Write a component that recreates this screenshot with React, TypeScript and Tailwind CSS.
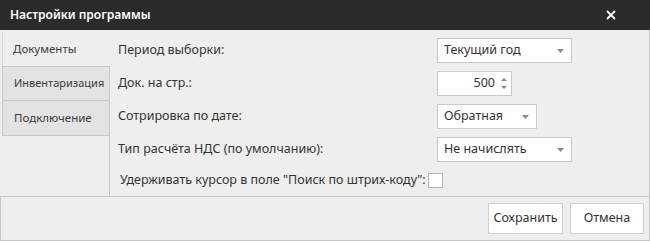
import React from "react";

const font = { fontFamily: '"Segoe UI", "Noto Sans", "Open Sans", sans-serif' };

function Caret() {
  return (
    <svg width="7" height="4" viewBox="0 0 7 4" className="text-[#8a8a8a]">
      <path d="M0 0 L7 0 L3.5 4 Z" fill="currentColor" />
    </svg>
  );
}

function Select({ value, width }: { value: string; width: string }) {
  return (
    <div className={`${width} h-[25px] bg-white border border-[#c9c9c9] flex items-center justify-between pl-[6px] pr-[7px] text-[12.5px] text-[#333]`}>
      <span>{value}</span>
      <Caret />
    </div>
  );
}

export default function App() {
  return (
    <div className="w-[650px] h-[241px] flex flex-col bg-[#eeeeee] text-[#3a3a3a]" style={font}>
      <div className="h-[30px] bg-[#2b2b2b] flex items-center justify-between pl-[10px] pr-[34px] text-white">
        <span className="text-[12px] font-semibold">Настройки программы</span>
        <svg width="10" height="10" viewBox="0 0 10 10">
          <path d="M1 1 L9 9 M9 1 L1 9" stroke="white" strokeWidth="1.8" />
        </svg>
      </div>
      <div className="flex-1 flex border-r border-[#c6c6c6]">
        <div className="w-[110px] flex flex-col pt-[1px] pl-[2px]">
          <div className="h-[35px] flex items-center pl-[10px] text-[11.5px] border-l border-[#d6d6d6] bg-[#eeeeee]">Документы</div>
          <div className="h-[35px] flex items-center pl-[11px] text-[11px] bg-[#e3e3e3] border border-[#c8c8c8]">Инвентаризация</div>
          <div className="h-[35px] flex items-center pl-[11px] text-[11.5px] bg-[#e3e3e3] border border-t-0 border-[#c8c8c8]">Подключение</div>
          <div className="flex-1 border-r border-[#c8c8c8]" />
        </div>
        <div className="flex-1 flex flex-col pt-[8px] pl-[8px] text-[12.5px] text-[#333]">
          <div className="flex items-center h-[25px]">
            <div className="w-[319px]">Период выборки:</div>
            <Select value="Текущий год" width="w-[135px]" />
          </div>
          <div className="flex items-center h-[25px] mt-[8px]">
            <div className="w-[319px]">Док. на стр.:</div>
            <div className="w-[75px] h-[25px] bg-white border border-[#c9c9c9] flex items-center justify-end pr-[4px]">
              <span className="mr-[6px]">500</span>
              <div className="flex flex-col gap-[5px] text-[#8a8a8a]">
                <svg width="6" height="3" viewBox="0 0 6 3"><path d="M0 3 L6 3 L3 0 Z" fill="currentColor" /></svg>
                <svg width="6" height="3" viewBox="0 0 6 3"><path d="M0 0 L6 0 L3 3 Z" fill="currentColor" /></svg>
              </div>
            </div>
          </div>
          <div className="flex items-center h-[25px] mt-[8px]">
            <div className="w-[319px]">Сотрировка по дате:</div>
            <Select value="Обратная" width="w-[100px]" />
          </div>
          <div className="flex items-center h-[25px] mt-[8px]">
            <div className="w-[319px]">Тип расчёта НДС (по умолчанию):</div>
            <Select value="Не начислять" width="w-[135px]" />
          </div>
          <div className="flex items-center h-[25px] mt-[6px] pl-[2px]">
            <span>Удерживать курсор в поле "Поиск по штрих-коду":</span>
            <div className="w-[15px] h-[15px] bg-white border border-[#b5b5b5] ml-[2px]" />
          </div>
        </div>
      </div>
      <div className="h-[45px] border border-[#c6c6c6] flex items-center justify-end gap-[7px] pr-[5px]">
        <div className="w-[75px] h-[31px] bg-white border border-[#d0d0d0] flex items-center justify-center text-[12.5px] text-[#333]">Сохранить</div>
        <div className="w-[74px] h-[31px] bg-white border border-[#d0d0d0] flex items-center justify-center text-[12.5px] text-[#333]">Отмена</div>
      </div>
    </div>
  );
}
